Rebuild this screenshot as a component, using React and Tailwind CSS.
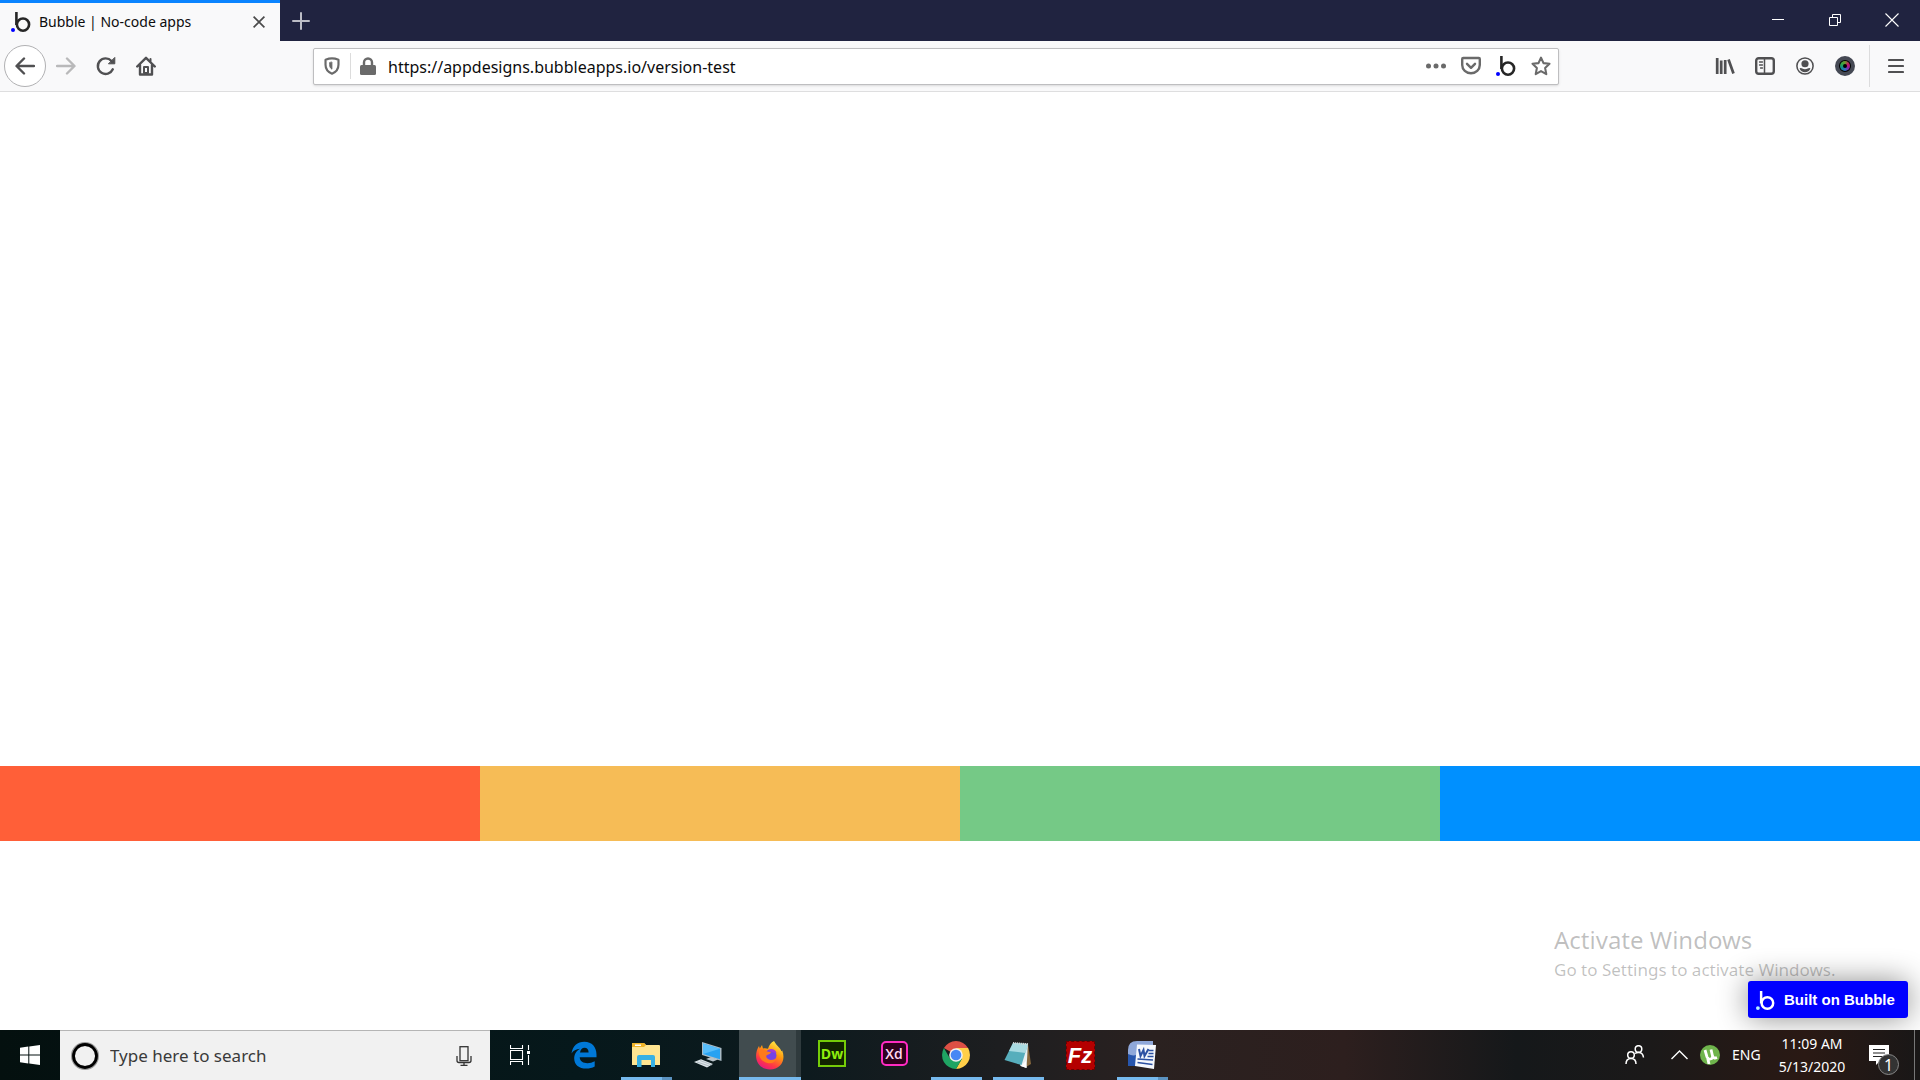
const strips = ["bg-[#ff5f38]", "bg-[#f6bc56]", "bg-[#75c986]", "bg-[#0090ff]"];

function BubbleLogo({ className, dot = "#0000ff" }) {
  return (
    <svg viewBox="0 0 20 20" className={className} fill="none" aria-hidden="true">
      <path d="M5.4 0v13" stroke="currentColor" strokeWidth="2.6" />
      <circle cx="12" cy="12.6" r="6.1" stroke="currentColor" strokeWidth="2.6" />
      <circle cx="2" cy="18" r="2" fill={dot} />
    </svg>
  );
}

function Icon({ children, size = "size-5", box = "0 0 20 20" }) {
  return (
    <svg
      viewBox={box}
      className={`${size} shrink-0`}
      fill="none"
      stroke="currentColor"
      strokeWidth="2.4"
      strokeLinecap="round"
      strokeLinejoin="round"
      aria-hidden="true"
    >
      {children}
    </svg>
  );
}

function IconButton({ label, className = "", children }) {
  return (
    <button
      type="button"
      aria-label={label}
      className={`flex shrink-0 items-center justify-center ${className}`}
    >
      {children}
    </button>
  );
}

function TabBar() {
  return (
    <header className="flex h-[41px] bg-[#202340]">
      <div className="flex w-[280px] items-center border-t-3 border-[#0a84ff] bg-[#f9f9fa] pr-[15px] pb-px pl-[11px]">
        <BubbleLogo className="size-5 text-[#262626]" />
        <span className="ml-2 flex-1 text-sm text-[#0c0c0d]">Bubble | No-code apps</span>
        <IconButton label="Close tab" className="text-[#4a4a4a]">
          <svg viewBox="0 0 12 12" className="size-3" stroke="currentColor" strokeWidth="1.7">
            <path d="M.6.6l10.8 10.8M11.4.6L.6 11.4" />
          </svg>
        </IconButton>
      </div>
      <IconButton label="New tab" className="w-[42px] text-[#bcbdc6]">
        <svg viewBox="0 0 18 18" className="size-[18px]" stroke="currentColor" strokeWidth="2" strokeLinecap="round">
          <path d="M9 1v16M1 9h16" />
        </svg>
      </IconButton>
      <div className="ml-auto flex pb-px text-white">
        <IconButton label="Minimize" className="w-[57px]">
          <svg viewBox="0 0 12 12" className="size-3" stroke="currentColor">
            <path d="M0 5.5h12" />
          </svg>
        </IconButton>
        <IconButton label="Restore" className="w-[57px]">
          <svg viewBox="0 0 12 12" className="size-3" fill="none" stroke="currentColor">
            <path d="M.5 3.5h8v8h-8zM3.500 3.500v-3h8v8h-3" />
          </svg>
        </IconButton>
        <IconButton label="Close" className="w-[57px]">
          <svg viewBox="0 0 14 14" className="size-[14px]" stroke="currentColor" strokeWidth="1.1">
            <path d="M.5.5l13 13M13.500.5l-13 13" />
          </svg>
        </IconButton>
      </div>
    </header>
  );
}

function AddressBar() {
  return (
    <div className="mr-[146px] ml-[147px] flex h-[37px] flex-1 items-center rounded-xs border border-[#bebec0] bg-white text-[#6a6a6a] shadow-sm">
      <IconButton label="Tracking protection" className="w-9">
        <Icon size="size-[18px]">
          <path d="M10 1.600c2.800 0 5 .6 7.200 1.400v5.500c0 5-2.500 8-7.200 10-4.700-2-7.200-5-7.200-10V3C5 2.200 7.200 1.600 10 1.600z" />
          <path d="M9.900 6v7.500c-2-1.200-2.500-3-2.500-5V6.500z" fill="currentColor" strokeWidth="1" />
        </Icon>
      </IconButton>
      <span className="h-[26px] w-px bg-[#dcdcdc]" />
      <IconButton label="Site information" className="w-[34px]">
        <svg viewBox="0 0 16 18" className="h-[18px] w-4" fill="none">
          <path d="M4 9V5.500a4 4 0 018 0V9" stroke="currentColor" strokeWidth="2.400" />
          <rect y="8" width="16" height="10" rx="1.500" fill="currentColor" />
        </svg>
      </IconButton>
      <input
        type="text"
        aria-label="Address"
        defaultValue="https://appdesigns.bubbleapps.io/version-test"
        className="ml-[3px] min-w-0 flex-1 pt-[2px] text-base text-[#0c0c0d] outline-none"
      />
      <div className="flex">
        <IconButton label="Page actions" className="w-[35px]">
          <svg viewBox="0 0 20 6" className="h-[6px] w-5" fill="currentColor">
            <circle cx="2.500" cy="3" r="2.500" />
            <circle cx="10" cy="3" r="2.500" />
            <circle cx="17.500" cy="3" r="2.500" />
          </svg>
        </IconButton>
        <IconButton label="Save to Pocket" className="w-[35px]">
          <Icon>
            <path d="M2.200 2h15.600q1 0 1 1v6a8.800 8.300 0 01-17.600 0V3q0-1 1-1z" />
            <path d="M6 7.800l4 4 4-4" />
          </Icon>
        </IconButton>
        <IconButton label="Bubble" className="w-[35px]">
          <BubbleLogo className="size-5 text-[#262626]" />
        </IconButton>
        <IconButton label="Bookmark this page" className="w-[35px]">
          <Icon>
            <path
              strokeWidth="2.100"
              d="M10 1.600l2.500 5.500 6 .7-4.400 4.100 1.200 6.200-5.300-3-5.300 3 1.200-6.200L1.500 7.800l6-.7z"
            />
          </Icon>
        </IconButton>
      </div>
    </div>
  );
}

function Toolbar() {
  return (
    <nav className="flex h-[51px] items-center border-b border-[#dededf] bg-[#f9f9fa] px-1 text-[#505052]">
      <IconButton label="Back" className="size-[42px] rounded-full border border-[#b1b1b3] bg-white">
        <Icon>
          <path d="M19 10H2M9 2.500L1.500 10 9 17.500" />
        </Icon>
      </IconButton>
      <IconButton label="Forward" className="w-10 text-[#b9b9ba]">
        <Icon>
          <path d="M1 10h17M11 2.500l7.500 7.500-7.500 7.500" />
        </Icon>
      </IconButton>
      <IconButton label="Reload" className="w-10">
        <Icon>
          <path d="M16.800 13.300a7.800 7.800 0 11-1.300-8.300" />
          <path d="M18.800 1.800v6h-6z" fill="currentColor" strokeWidth="1" />
        </Icon>
      </IconButton>
      <IconButton label="Home" className="w-10">
        <Icon>
          <path d="M1.200 10.500L10 1.800l8.800 8.700M4 9v9.500h12V9" />
          <path d="M8 17v-6h4v6zM14.500 3v2" strokeWidth="2" />
        </Icon>
      </IconButton>
      <AddressBar />
      <div className="flex">
        <IconButton label="Library" className="w-10">
          <Icon>
            <path
              d="M2.200 2v16M6.200 4.500V18M10.200 4v14M13.500 3.500l5 14"
              strokeWidth="2.700"
              strokeLinecap="butt"
            />
          </Icon>
        </IconButton>
        <IconButton label="Sidebars" className="w-10">
          <Icon>
            <rect x="1.200" y="2.200" width="17.600" height="15.600" rx="2.500" />
            <path d="M9.500 2v16" strokeWidth="1.500" />
            <path d="M4.500 6h3M4.500 9h3M5.500 12h2" strokeWidth="1.300" />
          </Icon>
        </IconButton>
        <IconButton label="Account" className="w-10">
          <Icon size="size-[18px]">
            <circle cx="10" cy="10" r="9" strokeWidth="1.700" />
            <circle cx="10" cy="7.500" r="4" fill="currentColor" stroke="none" />
            <path
              d="M4 12.500q2-.5 3 .3 3 1.400 6 0 1-.8 3-.3c-.5 3-3.500 4.500-6 4.500s-5.500-1.500-6-4.500z"
              fill="currentColor"
              stroke="none"
            />
          </Icon>
        </IconButton>
        <IconButton label="Color picker" className="w-10">
          <span className="flex size-5 items-center justify-center rounded-full border-4 border-[#454954] bg-black">
            <span className="size-[10px] rounded-full bg-[conic-gradient(#6c9a2c,#c81560,#8b22a8,#2f6fc0,#128a90,#2fa848,#6c9a2c)] p-[3px]">
              <span className="block size-1 rounded-full bg-black" />
            </span>
          </span>
        </IconButton>
      </div>
      <span className="ml-1 h-[42px] w-px bg-[#dcdcdd]" />
      <IconButton label="Open menu" className="w-[46px] pl-[6px]">
        <svg viewBox="0 0 16 16" className="size-4" stroke="currentColor" strokeWidth="2.200" strokeLinecap="round">
          <path d="M1 2h14M1 8h14M1 14h14" />
        </svg>
      </IconButton>
    </nav>
  );
}

function Page() {
  return (
    <main className="relative flex flex-1 flex-col justify-end overflow-hidden bg-white pb-[189px]">
      <div className="grid h-[75px] grid-cols-4">
        {strips.map((color) => (
          <div key={color} className={color} />
        ))}
      </div>
      <a
        href="#bubble"
        className="absolute right-[12px] bottom-[12px] flex h-[37px] w-[160px] items-center rounded-[3px] bg-[#0000ff] pt-[2px] pl-[8px] font-['Liberation_Sans',sans-serif] text-[15px] font-bold text-white shadow-[0_0_30px_rgba(0,0,0,0.45)]"
      >
        <BubbleLogo className="size-[19px]" dot="#b8f4ff" />
        <span className="ml-[9px] whitespace-nowrap">Built on Bubble</span>
      </a>
      <div className="pointer-events-none absolute right-[82px] bottom-[46px] w-[284px] whitespace-nowrap text-black/25">
        <p className="text-2xl leading-[32px]">Activate Windows</p>
        <p className="text-[17px] leading-[28px]">Go to Settings to activate Windows.</p>
      </div>
    </main>
  );
}

function EdgeIcon() {
  return (
    <svg viewBox="0 0 26 28" className="h-7 w-[26px]">
      <path
        fill="#0078d7"
        d="M.5 12.500C1.500 5 6.500.7 13.300.7 21 .7 25.500 6 25.500 13.500v2.800H8.700c.2 4.200 3.700 5.900 7.700 5.900 2.700 0 5-.7 7.300-2v5.400c-2.500 1.400-5.300 2-8.500 2C8 27.600 3.200 23.800 3.200 17.500c0-4.300 2.200-7.800 6-9.700C5 8 2.200 9.800.5 12.500zM9 11.500h8.600c0-3-1.500-4.700-4.100-4.700-2.300 0-4 1.700-4.500 4.700z"
      />
    </svg>
  );
}

function ExplorerIcon() {
  return (
    <svg viewBox="0 0 28 24" className="h-6 w-7">
      <path d="M0 1q0-1 1-1h11l2 2h13q1 0 1 1v19H0z" fill="#ffe591" />
      <path d="M0 1q0-1 1-1h11l2 2-2 2H0z" fill="#f0b429" />
      <path d="M3 1.500h6v1.500H3z" fill="#fff" />
      <path d="M5 24V14q0-2 2-2h14q2 0 2 2v10h-4v-7H9.500v7z" fill="#38b1e4" />
    </svg>
  );
}

function ComputerIcon() {
  return (
    <svg viewBox="0 0 28 26" className="h-[26px] w-7">
      <path d="M8 0l19.500 6v13L8 13z" fill="#a9bac5" />
      <path d="M9 1.500l17 5.300v10.500L9 12z" fill="#27a2f2" />
      <path d="M9 1.500l17 5.300L9 12z" fill="#58bdfa" />
      <path d="M12 17l5-2 7 2.500-5 2z" fill="#b8c3c9" />
      <path d="M0 20l7-2.800L19 22l-6 3.500z" fill="#dce4e8" />
      <path d="M3 20l12 4M6 18.500L18 23" stroke="#a2afb7" strokeWidth=".7" />
    </svg>
  );
}

function FirefoxIcon() {
  return (
    <svg viewBox="0 0 28 29" className="h-[29px] w-7">
      <defs>
        <linearGradient id="fox" x1=".8" y1="0" x2=".25" y2="1">
          <stop offset="0" stopColor="#fff44f" />
          <stop offset=".4" stopColor="#ff980e" />
          <stop offset=".75" stopColor="#ff3647" />
          <stop offset="1" stopColor="#e31587" />
        </linearGradient>
      </defs>
      <path
        fill="url(#fox)"
        d="M18 0c2 3 2.500 4 5 6.500 1.500 1.500 2 2.500 2.200 3.800l1-.8c4 10-1.700 19-12.200 19S-1.500 20 .5 11C1 8.500 2 6.500 3 5l.8 2.500L6 4l1 3.500c1.800-.5 3-.3 5 .2C13 4 15 1.500 18 0z"
      />
      <circle cx="14.500" cy="14.500" r="6" fill="#7542e5" />
      <path d="M12 9c3-2 7.500-1 8.500 3l-5-1z" fill="#a33bd5" />
      <path
        d="M3 9c3-1.500 6-.5 8 1.500l4 .5c-.5 2-3 2.500-4.500 3.500-1 1 .5 4.500 4.500 4.500 2.500 0 4-1 5.500-2-1 4.500-5 6-9 5C5 20.500 2 15 3 9z"
        fill="#ff7a1c"
      />
    </svg>
  );
}

function ChromeIcon() {
  return (
    <svg viewBox="0 0 28 28" className="size-7">
      <path d="M14 14L1.900 7A14 14 0 0126.100 7z" fill="#dc5045" />
      <path d="M14 7h12.100A14 14 0 0114 28l6-10.500z" fill="#ffcf48" />
      <path d="M1.900 7A14 14 0 0014 28l6.100-10.500L14 14l-6 3.500z" fill="#1fa463" />
      <circle cx="14" cy="14" r="6.800" fill="#f1f1f1" />
      <circle cx="14" cy="14" r="5.300" fill="#4688f4" />
    </svg>
  );
}

function NotepadIcon() {
  return (
    <svg viewBox="0 0 28 28" className="size-7">
      <path d="M24 3l3 20-5 3z" fill="#86683c" />
      <path d="M9 2l15 1-1.500 24-6-2z" fill="#e8f0f1" />
      <path d="M9 2l15 1-6.500 21L.5 19z" fill="#57aebc" />
      <path d="M9 2l15 1-2.500 9L5 10z" fill="#a9dbe2" />
      <path d="M17 25l5.500 2-.5-7z" fill="#fff" />
      <path d="M9 2l15 1.200" stroke="#cfd5d5" strokeWidth="2" strokeDasharray="1.200 .8" />
    </svg>
  );
}

function WordIcon() {
  return (
    <svg viewBox="0 0 28 28" className="size-7">
      <path d="M0 25V9q0-9 9-9h16v25z" fill="#8fa8da" />
      <path d="M0 25V13q8 4 12-3v15z" fill="#2756ad" />
      <path d="M9 3.500L28 4l-2 24-19-3z" fill="#f5f8fd" />
      <path d="M11 8l1.500 7 3-6 1 6 4-7" fill="none" stroke="#2b50a2" strokeWidth="2" />
      <path
        d="M20.500 9.500h5M20.500 12.500h5M19.500 15.500h6M9.500 18l15.500 1M9.500 21.500l15 2"
        stroke="#2b50a2"
        strokeWidth="1.700"
      />
    </svg>
  );
}

const apps = [
  { name: "Microsoft Edge", icon: <EdgeIcon /> },
  { name: "File Explorer", icon: <ExplorerIcon />, open: true, stacked: true },
  { name: "Computer", icon: <ComputerIcon /> },
  { name: "Firefox", icon: <FirefoxIcon />, open: true, active: true },
  {
    name: "Dreamweaver",
    icon: (
      <span className="mb-[3px] flex h-[27px] w-7 items-center justify-center border-2 border-[#75cc08] bg-[#112400] font-['Open_Sans',sans-serif] text-sm font-bold text-[#8eee0d]">
        Dw
      </span>
    ),
  },
  {
    name: "Adobe XD",
    icon: (
      <span className="mb-[3px] flex h-[25px] w-[27px] items-center justify-center rounded-[5px] border-2 border-[#ff2bc2] bg-[#2e001e] font-['Open_Sans',sans-serif] text-sm font-semibold text-[#ffd9f2]">
        Xd
      </span>
    ),
  },
  { name: "Chrome", icon: <ChromeIcon />, open: true },
  { name: "Notepad", icon: <NotepadIcon />, open: true },
  {
    name: "FileZilla",
    icon: (
      <span className="flex size-[29px] items-center justify-center border border-dashed border-[#6b0000] bg-[#b40000] font-['Liberation_Sans',sans-serif] text-[22px] font-bold text-white italic">
        Fz
      </span>
    ),
  },
  { name: "Word", icon: <WordIcon />, open: true, stacked: true },
];

function TaskButton({ app }) {
  return (
    <button
      type="button"
      aria-label={app.name}
      className={`relative flex w-[62px] items-center justify-center
        ${app.active ? "bg-linear-to-r from-[#414c4f] from-92% to-[#2f3a3d] to-92%" : ""}
      `}
    >
      {app.icon}
      {app.open && (
        <span
          className={`absolute bottom-0 h-[3px] bg-[#76b9ed]
            ${app.active ? "right-0 left-0" : "right-[5px] left-[6px]"}
            ${app.stacked ? "border-r-10 border-[#5b92c0]" : ""}
          `}
        />
      )}
    </button>
  );
}

function Taskbar() {
  return (
    <footer className="flex h-[50px] bg-[linear-gradient(to_right,#04100f,#06181b_30%,#0d1a1e_42%,#1d1e20_52%,#2a2120_60%,#2d1f1e_70%,#15181a_79%,#1b1919_86%,#2a1914_94%,#191717)] text-white">
      <IconButton label="Start" className="w-[60px]">
        <svg viewBox="0 0 20 20" className="size-5" fill="currentColor">
          <path d="M0 2.800l8.300-1.200v7.900H0zM9.300 1.400L20 0v9.500H9.300zM0 10.500h8.300v7.900L0 17.200zM9.300 10.500H20V20L9.300 18.600z" />
        </svg>
      </IconButton>
      <label className="flex w-[430px] items-center border-t border-[#b5b5b5] bg-[#f1f1f1] pr-[18px] pl-[11px] text-[#2b2b2b]">
        <svg viewBox="0 0 28 28" className="size-7" fill="none">
          <circle cx="14" cy="14" r="12" stroke="#999" strokeWidth="4" />
          <circle cx="14" cy="14" r="11.500" stroke="#000" strokeWidth="2.800" />
        </svg>
        <input
          type="text"
          aria-label="Search"
          placeholder="Type here to search"
          className="ml-[11px] min-w-0 flex-1 text-[17px] outline-none placeholder:text-[#3a3a3a]"
        />
        <svg viewBox="0 0 16 20" className="h-5 w-4" fill="none" stroke="#333" strokeWidth="1.300">
          <rect x="4" y=".7" width="8" height="14" />
          <path d="M1 10v4.500q0 2 2 2h10q2 0 2-2V10M8 16.500V19M4.500 19.300h7" />
        </svg>
      </label>
      <IconButton label="Task view" className="mr-[3px] w-[60px]">
        <svg viewBox="0 0 20 20" className="size-5" fill="none" stroke="currentColor" strokeWidth="1.100">
          <path d="M.5 0v3.500h12V0M.5 5.500h12v9H.5zM.5 20v-3.500h12V20M18.500 0v5M18.500 10v10" />
          <path d="M17 6h3v3h-3z" fill="currentColor" stroke="none" />
        </svg>
      </IconButton>
      {apps.map((app) => (
        <TaskButton key={app.name} app={app} />
      ))}
      <div className="ml-auto flex items-center">
        <IconButton label="People" className="mr-[14px] h-full w-[45px]">
          <svg viewBox="0 0 20 20" className="size-5" fill="none" stroke="currentColor" strokeWidth="1.500">
            <circle cx="6" cy="10" r="3.300" />
            <circle cx="13.500" cy="4" r="3.300" />
            <path d="M1 19q0-5.500 5-5.500t5 5.500M10 8.500q1.500-1 3.500-1 4.500 0 5 5" />
          </svg>
        </IconButton>
        <IconButton label="Show hidden icons" className="h-full w-[17px]">
          <svg viewBox="0 0 17 10" className="h-[10px] w-[17px]" fill="none" stroke="currentColor" strokeWidth="1.400">
            <path d="M.5 9l8-8 8 8" />
          </svg>
        </IconButton>
        <IconButton label="uTorrent" className="mx-3 h-full w-5">
          <svg viewBox="0 0 20 20" className="size-5">
            <circle cx="10" cy="10" r="10" fill="#6fb44c" />
            <path
              d="M5 5l2 7q1 2.500 3.500 2t2-3L11 4.500M12.500 11q1 3 4.500 1.500M7.500 12.500L9 19"
              fill="none"
              stroke="#fff"
              strokeWidth="2.800"
            />
          </svg>
        </IconButton>
        <span className="w-8 text-sm">ENG</span>
        <div className="w-[96px] text-center text-sm leading-[23px] whitespace-nowrap">
          <p>11:09 AM</p>
          <p>5/13/2020</p>
        </div>
        <IconButton label="1 new notification" className="relative ml-[9px] h-full w-5">
          <svg viewBox="0 0 20 20" className="size-5">
            <path d="M0 0h20v16h-9l-4 4v-4H0z" fill="#fff" />
            <path d="M4 4.500h12M4 8h12M4 11.500h12" stroke="#222" strokeWidth="1.200" />
          </svg>
          <span className="absolute bottom-[5px] left-[9px] flex size-[21px] items-center justify-center rounded-full border border-[#888] bg-[#333] text-base">
            1
          </span>
        </IconButton>
        <span className="ml-[25px] h-full w-px bg-[#777]" />
        <button type="button" aria-label="Show desktop" className="h-full w-[5px]" />
      </div>
    </footer>
  );
}

export default function App() {
  return (
    <div className="flex min-h-screen flex-col font-['Noto_Sans','Open_Sans',sans-serif]">
      <TabBar />
      <Toolbar />
      <Page />
      <Taskbar />
    </div>
  );
}
